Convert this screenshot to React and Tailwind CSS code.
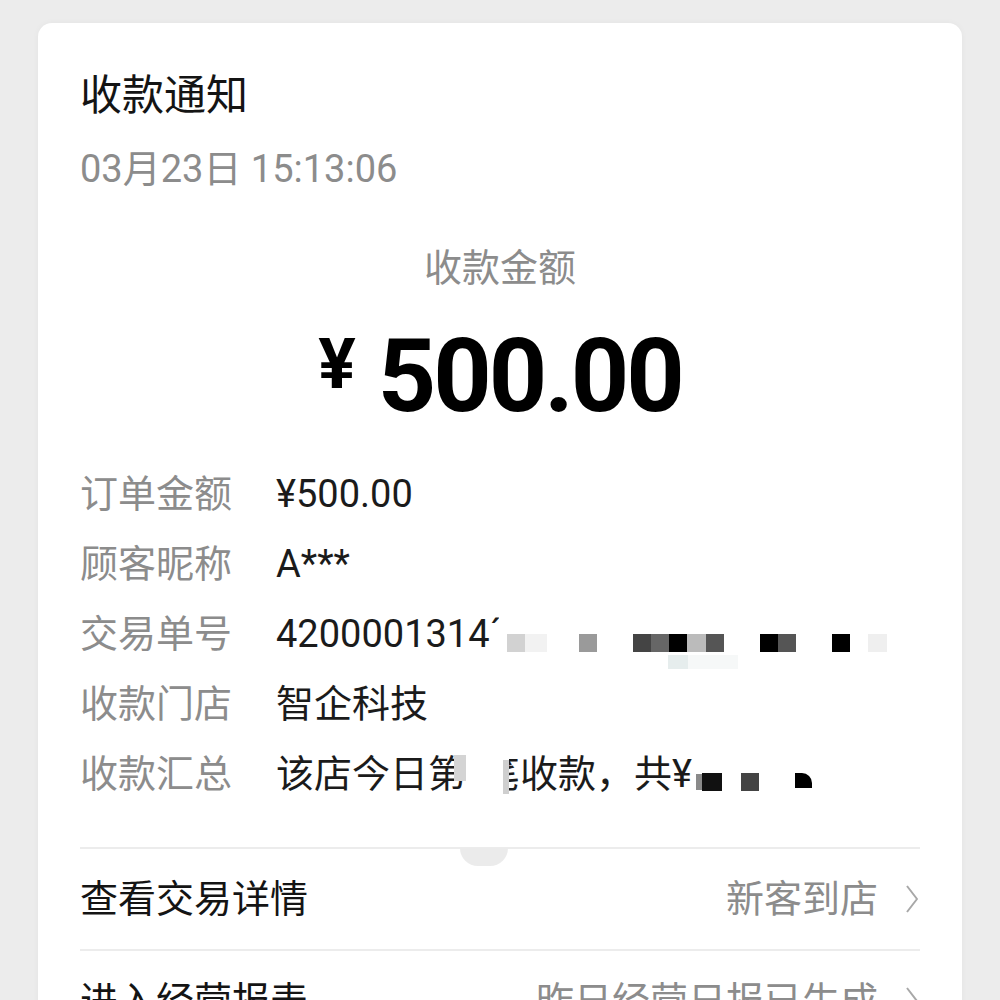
import { Fragment } from 'react'

const font = "font-['Roboto','Noto_Sans_CJK_SC',sans-serif]"

// censor blocks on the transaction number, [width, colour]
const txnBlocks = [
  ['w-[18px]', 'bg-[#d2d2d2]'],
  ['w-[22px]', 'bg-[#f2f2f2]'],
  ['w-[32px]', 'bg-transparent'],
  ['w-[18px]', 'bg-[#9a9a9a]'],
  ['w-[36px]', 'bg-transparent'],
  ['w-[18px]', 'bg-[#444]'],
  ['w-[18px]', 'bg-[#666]'],
  ['w-[18px]', 'bg-black'],
  ['w-[19px]', 'bg-[#bbb]'],
  ['w-[18px]', 'bg-[#555]'],
  ['w-[36px]', 'bg-transparent'],
  ['w-[18px]', 'bg-black'],
  ['w-[18px]', 'bg-[#555]'],
  ['w-[36px]', 'bg-transparent'],
  ['w-[18px]', 'bg-black'],
  ['w-[18px]', 'bg-transparent'],
  ['w-[19px]', 'bg-[#efefef]'],
]

function Chevron() {
  return (
    <svg width="16" height="30" viewBox="0 0 16 30" className="ml-[26px] shrink-0">
      <path d="M3 2 L13 15 L3 28" fill="none" stroke="#a8a8a8" strokeWidth="2" strokeLinejoin="round" />
    </svg>
  )
}

function Row({ label, children }) {
  return (
    <div className="flex items-center h-[70px]">
      <span className="w-[196px] shrink-0 text-[38px] text-[#8c8c8c]">{label}</span>
      <div className="flex items-center text-[38px] text-[#1b1b1b]">{children}</div>
    </div>
  )
}

export default function App() {
  return (
    <div className={`h-[1000px] overflow-hidden bg-[#ececec] pt-[23px] px-[38px] ${font}`}>
      <div className="bg-white rounded-[14px] shadow-[0_0_6px_rgba(0,0,0,0.04)] px-[42px] pt-[49px] min-h-[1100px]">

        {/* header */}
        <h1 className="text-[42px] leading-[48px] text-[#141414]">收款通知</h1>
        <p className="mt-[26px] text-[38px] leading-[46px] text-[#8c8c8c]">03月23日 15:13:06</p>

        {/* amount */}
        <p className="mt-[54px] text-center text-[38px] leading-[44px] text-[#8c8c8c]">收款金额</p>
        <div className="mt-[31px] flex items-center justify-center h-[110px] text-black font-bold">
          <span className="text-[70px] leading-[70px] mr-[22px] -mt-[24px]">¥</span>
          <span className="text-[102px] leading-[110px] tracking-[-3px]">500.00</span>
        </div>

        {/* details */}
        <div className="mt-[28px]">
          <Row label="订单金额">¥500.00</Row>
          <Row label="顾客昵称">A***</Row>
          <Row label="交易单号">
            <span>4200001314</span>
            <span className="w-[9px] overflow-hidden">´</span>
            <span className="relative flex items-center h-[18px] mt-[18px] ml-[8px]">
              {txnBlocks.map(([w, c], i) => (
                <span key={i} className={`h-[18px] ${w} ${c}`} />
              ))}
              <span className="absolute left-[161px] top-[21px] h-[14px] w-[20px] bg-[#e6eded]" />
              <span className="absolute left-[181px] top-[21px] h-[14px] w-[50px] bg-[#f6f8f8]" />
            </span>
          </Row>
          <Row label="收款门店">智企科技</Row>
          <Row label="收款汇总">
            <span>该店今日第</span>
            <span className="w-[12px] h-[26px] bg-[#d4d4d4] -mt-[12px] -ml-[12px]" />
            <span className="w-[37px]" />
            <span className="w-[6px] h-[34px] bg-[#cfcfcf] mt-[6px]" />
            <span className="w-[11px] overflow-hidden flex justify-end"><span>笔</span></span>
            <span>收款，共¥</span>
            <span className="flex items-center mt-[16px] ml-[4px]">
              <span className="w-[6px] h-[16px] bg-[#8a8a8a]" />
              <span className="w-[20px] h-[18px] bg-[#111]" />
              <span className="w-[19px]" />
              <span className="w-[18px] h-[18px] bg-[#444]" />
              <span className="w-[36px]" />
              <span className="w-[17px] h-[15px] bg-black rounded-tr-[10px] -mt-[3px]" />
            </span>
          </Row>
        </div>

        {/* actions */}
        <div className="relative mt-[38px] border-t-2 border-[#ececec]">
          <span className="absolute left-[380px] -top-[1px] w-[48px] h-[18px] rounded-b-full bg-[#ebebeb]" />
          {[
            ['查看交易详情', '新客到店'],
            ['进入经营报表', '昨日经营日报已生成'],
          ].map(([left, right], i) => (
            <Fragment key={left}>
              {i > 0 && <div className="border-t-2 border-[#ececec]" />}
              <div className="flex items-center justify-between h-[100px] text-[38px]">
                <span className="text-[#141414]">{left}</span>
                <span className="flex items-center text-[#8c8c8c]">
                  {right}
                  <Chevron />
                </span>
              </div>
            </Fragment>
          ))}
        </div>
      </div>
    </div>
  )
}
